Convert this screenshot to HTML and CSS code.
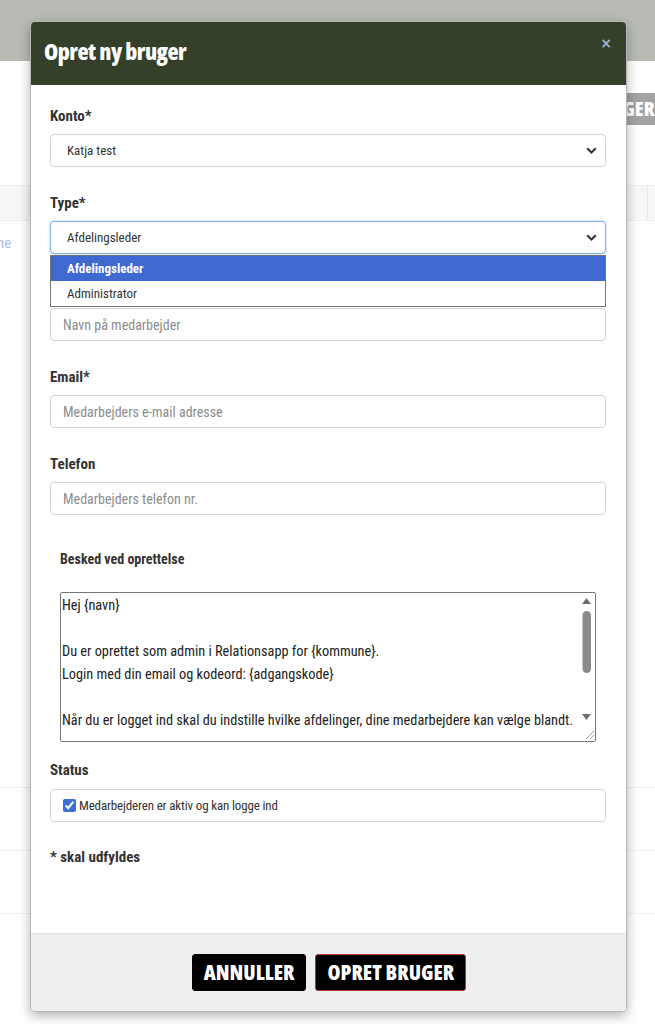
FILE: index.html
```html
<!DOCTYPE html>
<html lang="da">
<head>
<meta charset="utf-8">
<title>Opret ny bruger</title>
<link rel="stylesheet" href="styles.css">
</head>
<body>
<div class="page">
  <div class="topbar"></div>
  <div class="toolbar"><span class="ghost-btn">GER</span></div>
  <div class="table-head"><span class="col-line"></span></div>
  <div class="table-row first"><span class="link">ne</span></div>
  <div class="table-row"></div>
  <div class="table-row"></div>
</div>

<div class="modal">
  <div class="modal-header">
    <h1 class="modal-title">Opret ny bruger</h1>
    <span class="close">×</span>
  </div>
  <div class="modal-body">
    <div class="group">
      <label class="label">Konto*</label>
      <div class="select">
        <span>Katja test</span>
        <svg class="chev" width="11" height="7" viewBox="0 0 11 7"><path d="M1.2 1.2 L5.5 5.5 L9.8 1.2" fill="none" stroke="#333" stroke-width="2"/></svg>
      </div>
    </div>
    <div class="group">
      <label class="label">Type*</label>
      <div class="select-wrap">
        <div class="select focus">
          <span>Afdelingsleder</span>
          <svg class="chev" width="11" height="7" viewBox="0 0 11 7"><path d="M1.2 1.2 L5.5 5.5 L9.8 1.2" fill="none" stroke="#333" stroke-width="2"/></svg>
        </div>
        <ul class="dropdown">
          <li class="opt active">Afdelingsleder</li>
          <li class="opt">Administrator</li>
        </ul>
      </div>
    </div>
    <div class="group">
      <label class="label">Navn*</label>
      <div class="input placeholder">Navn på medarbejder</div>
    </div>
    <div class="group">
      <label class="label">Email*</label>
      <div class="input placeholder">Medarbejders e-mail adresse</div>
    </div>
    <div class="group">
      <label class="label">Telefon</label>
      <div class="input placeholder">Medarbejders telefon nr.</div>
    </div>
    <div class="group message">
      <label class="label">Besked ved oprettelse</label>
      <div class="ta-wrap">
        <textarea class="textarea">Hej {navn}

Du er oprettet som admin i Relationsapp for {kommune}.
Login med din email og kodeord: {adgangskode}

Når du er logget ind skal du indstille hvilke afdelinger, dine medarbejdere kan vælge blandt.

Med venlig hilsen
Relationsapp

</textarea>
        <svg class="scrollbar" width="15" height="148" viewBox="0 0 15 148">
          <path d="M6.5 5 L11 11 L2 11 Z" fill="#6e6e6e"/>
          <rect x="2.5" y="18" width="8.5" height="62" rx="4.25" fill="#8a8a8a"/>
          <path d="M2 121 L11 121 L6.5 127 Z" fill="#6e6e6e"/>
          <path d="M14 138 L6 146 M14 142 L10 146" stroke="#9a9a9a" stroke-width="1"/>
        </svg>
      </div>
    </div>
    <div class="group status">
      <label class="label">Status</label>
      <div class="check-box">
        <input type="checkbox" checked class="cb">
        <span>Medarbejderen er aktiv og kan logge ind</span>
      </div>
    </div>
    <p class="note">* skal udfyldes</p>
  </div>
  <div class="modal-footer">
    <button class="btn">ANNULLER</button>
    <button class="btn primary">OPRET BRUGER</button>
  </div>
</div>
</body>
</html>
```

FILE: styles.css
```css
* { box-sizing: border-box; }
html, body { margin: 0; padding: 0; }
body {
  width: 655px;
  height: 1024px;
  overflow: hidden;
  background: #fff;
  font-family: "Roboto", "Open Sans", sans-serif;
  font-stretch: 75%;
  color: #333;
  position: relative;
}

/* background page */
.page { display: flex; flex-direction: column; }
.topbar { height: 61px; background: #b8bbb4; }
.toolbar { height: 124px; display: flex; justify-content: flex-end; align-items: flex-start; padding-top: 32px; }
.ghost-btn {
  display: block; width: 36px; height: 32px; background: #a3a3a3; color: #fff;
  font-family: "Open Sans", sans-serif; font-stretch: 75%;
  font-weight: 800; font-size: 20px; line-height: 32px; overflow: hidden; white-space: nowrap;
  padding-left: 4px;
}
.table-head { height: 36px; background: #f7f7f7; border-top: 1px solid #f0f0f0; border-bottom: 1px solid #eee; display: flex; justify-content: flex-end; }
.col-line { width: 1px; margin-right: 7px; background: #eaeaea; }
.table-row { height: 63px; border-bottom: 1px solid #f0f0f0; }
.table-row.first { height: 567px; border-bottom: 1px solid #eee; }
.link { display: block; color: #a8b9ec; font-size: 15px; margin-top: 13px; margin-left: -3px; }

/* modal */
.modal {
  position: absolute;
  left: 30px;
  top: 21px;
  width: 597px;
  height: 991px;
  background: #fff;
  border-radius: 5px;
  box-shadow: 0 4px 12px rgba(0,0,0,0.3);
  display: flex;
  flex-direction: column;
  overflow: hidden;
  border: 1px solid #b5b5b5;
}
.modal-header {
  height: 63px;
  background: #344029;
  display: flex;
  align-items: flex-start;
  justify-content: space-between;
  padding: 0 14px 0 13px;
  flex: none;
}
.modal-title {
  margin: 13px 0 0 0;
  font-family: "Open Sans", sans-serif;
  font-stretch: 75%;
  font-size: 23px;
  font-weight: 800;
  color: #fff;
  letter-spacing: -0.5px;
}
.close {
  color: #a3b3ca;
  font-family: "DejaVu Sans", sans-serif;
  font-stretch: normal;
  font-weight: bold;
  font-size: 14px;
  margin-top: 13px;
}

.modal-body {
  flex: 1;
  padding: 21px 20px 0 19px;
  display: flex;
  flex-direction: column;
}
.group { display: flex; flex-direction: column; margin-bottom: 26px; }
.label {
  font-size: 15px;
  font-weight: 700;
  color: #333;
  line-height: 20px;
  margin-bottom: 8px;
}
.select, .input {
  height: 33px;
  border: 1px solid #d4d4d4;
  border-radius: 4px;
  display: flex;
  align-items: center;
  justify-content: space-between;
  padding: 0 8px 0 16px;
  font-size: 13px;
  color: #333;
  background: #fff;
}
.select.focus {
  border-color: #86b2ee;
  box-shadow: 0 0 0 1px rgba(120,170,240,0.25);
}
.input.placeholder { color: #8c8c8c; padding-left: 12px; font-size: 14px; }
.select-wrap { position: relative; }
.dropdown {
  position: absolute;
  left: 0;
  right: 0;
  top: 34px;
  margin: 0;
  padding: 0;
  list-style: none;
  background: #fff;
  border: 1px solid #767676;
  z-index: 2;
}
.opt {
  height: 25px;
  line-height: 25px;
  padding-left: 16px;
  font-size: 13px;
  color: #333;
}
.opt.active { background: #4068d1; color: #fff; font-weight: 700; }

.group.message { padding-left: 10px; padding-right: 10px; margin-top: 8px; margin-bottom: 18px; }
.group.message .label { margin-bottom: 23px; font-size: 14px; }
.ta-wrap { position: relative; height: 150px; }
.textarea {
  display: block;
  height: 150px;
  width: 100%;
  border: 1px solid #767676;
  border-radius: 2px;
  font-family: inherit;
  font-stretch: 75%;
  font-size: 14.3px;
  line-height: 23px;
  color: #222;
  padding: 1px 12px 1px 1px;
  resize: none;
  overflow: hidden;
  background: #fff;
}
.scrollbar {
  position: absolute;
  right: 1px;
  top: 1px;
}

.group.status { margin-bottom: 25px; }
.group.status .label { margin-bottom: 9px; }
.check-box {
  height: 33px;
  border: 1px solid #d4d4d4;
  border-radius: 4px;
  display: flex;
  align-items: center;
  padding-left: 12px;
  font-size: 13px;
  letter-spacing: -0.15px;
  color: #333;
  gap: 3px;
}
.cb { margin: 0; width: 13px; height: 13px; accent-color: #3c6fd8; }
.note { margin: 0; font-size: 15px; line-height: 20px; font-weight: 700; color: #333; }

.modal-footer {
  flex: none;
  height: 78px;
  background: #efefef;
  border-top: 1px solid #e2e2e2;
  display: flex;
  justify-content: center;
  align-items: center;
  gap: 9px;
  padding-left: 1px;
}
.btn {
  background: #000;
  color: #fff;
  border: 1px solid #000;
  border-radius: 3px;
  font-family: "Open Sans", sans-serif;
  font-stretch: 75%;
  font-weight: 800;
  font-size: 21px;
  height: 37px;
  padding: 0 11px;
  line-height: 1;
}
.btn.primary { border-color: #a8392c; }
```
